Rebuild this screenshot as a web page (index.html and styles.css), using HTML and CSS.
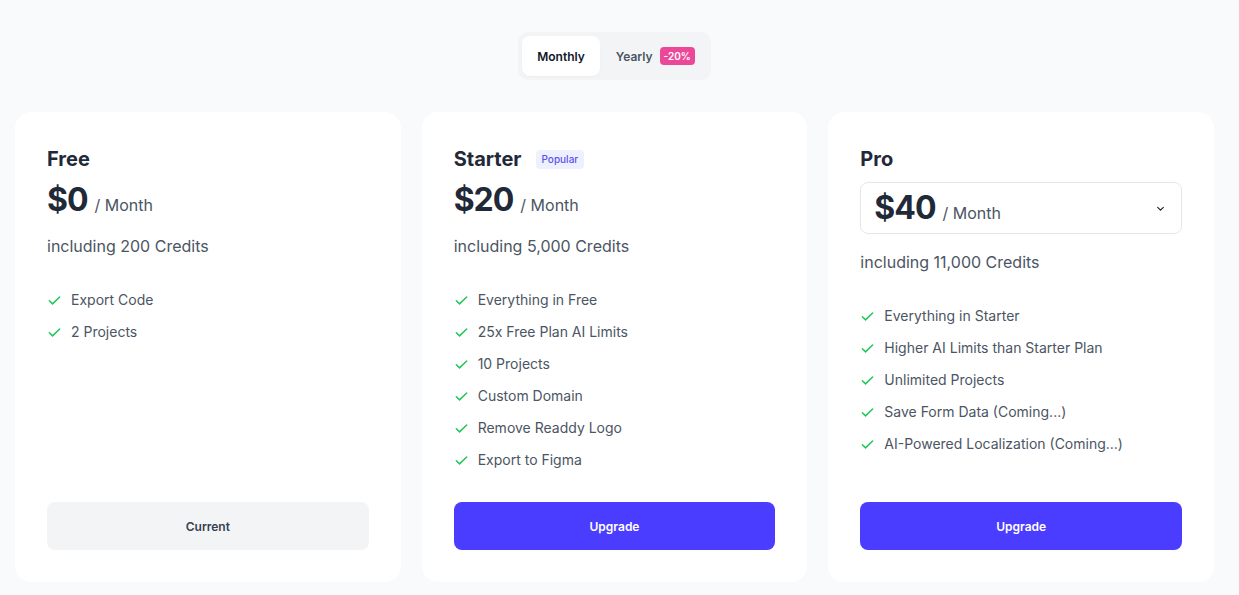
FILE: index.html
```html
<!DOCTYPE html>
<html>
<head>
<meta charset="utf-8">
<link rel="stylesheet" href="styles.css">
</head>
<body>
<div class="page">
  <div class="toggle-wrap">
    <div class="toggle">
      <button class="tab active">Monthly</button>
      <button class="tab">Yearly <span class="discount">-20%</span></button>
    </div>
  </div>
  <div class="cards">
    <div class="card">
      <div class="title-row"><h2 class="title">Free</h2></div>
      <div class="price"><span class="amount">$0</span><span class="per">/ Month</span></div>
      <p class="credits">including 200 Credits</p>
      <ul class="features">
        <li><svg class="check" viewBox="0 0 16 16"><path d="M2.5 8.3l3.4 3.3 7.6-7.4"/></svg>Export Code</li>
        <li><svg class="check" viewBox="0 0 16 16"><path d="M2.5 8.3l3.4 3.3 7.6-7.4"/></svg>2 Projects</li>
      </ul>
      <button class="btn btn-current">Current</button>
    </div>
    <div class="card">
      <div class="title-row"><h2 class="title">Starter</h2><span class="badge">Popular</span></div>
      <div class="price"><span class="amount">$20</span><span class="per">/ Month</span></div>
      <p class="credits">including 5,000 Credits</p>
      <ul class="features">
        <li><svg class="check" viewBox="0 0 16 16"><path d="M2.5 8.3l3.4 3.3 7.6-7.4"/></svg>Everything in Free</li>
        <li><svg class="check" viewBox="0 0 16 16"><path d="M2.5 8.3l3.4 3.3 7.6-7.4"/></svg>25x Free Plan AI Limits</li>
        <li><svg class="check" viewBox="0 0 16 16"><path d="M2.5 8.3l3.4 3.3 7.6-7.4"/></svg>10 Projects</li>
        <li><svg class="check" viewBox="0 0 16 16"><path d="M2.5 8.3l3.4 3.3 7.6-7.4"/></svg>Custom Domain</li>
        <li><svg class="check" viewBox="0 0 16 16"><path d="M2.5 8.3l3.4 3.3 7.6-7.4"/></svg>Remove Readdy Logo</li>
        <li><svg class="check" viewBox="0 0 16 16"><path d="M2.5 8.3l3.4 3.3 7.6-7.4"/></svg>Export to Figma</li>
      </ul>
      <button class="btn btn-primary">Upgrade</button>
    </div>
    <div class="card">
      <div class="title-row"><h2 class="title">Pro</h2></div>
      <div class="select">
        <div class="price"><span class="amount">$40</span><span class="per">/ Month</span></div>
        <svg class="chev" viewBox="0 0 16 16"><path d="M4.5 6.5L8 10l3.5-3.5"/></svg>
      </div>
      <p class="credits credits-pro">including 11,000 Credits</p>
      <ul class="features">
        <li><svg class="check" viewBox="0 0 16 16"><path d="M2.5 8.3l3.4 3.3 7.6-7.4"/></svg>Everything in Starter</li>
        <li><svg class="check" viewBox="0 0 16 16"><path d="M2.5 8.3l3.4 3.3 7.6-7.4"/></svg>Higher AI Limits than Starter Plan</li>
        <li><svg class="check" viewBox="0 0 16 16"><path d="M2.5 8.3l3.4 3.3 7.6-7.4"/></svg>Unlimited Projects</li>
        <li><svg class="check" viewBox="0 0 16 16"><path d="M2.5 8.3l3.4 3.3 7.6-7.4"/></svg>Save Form Data (Coming...)</li>
        <li><svg class="check" viewBox="0 0 16 16"><path d="M2.5 8.3l3.4 3.3 7.6-7.4"/></svg>AI-Powered Localization (Coming...)</li>
      </ul>
      <button class="btn btn-primary">Upgrade</button>
    </div>
  </div>
</div>
</body>
</html>
```
FILE: styles.css
```css
* { box-sizing: border-box; }
html, body { margin: 0; padding: 0; }
body {
  background: #f9fafb;
  font-family: Inter, "Noto Sans", sans-serif;
  color: #1f2937;
}
.page {
  width: 1239px;
  padding: 32px 25px 0 15px;
}
.toggle-wrap {
  display: flex;
  justify-content: center;
}
.toggle {
  display: flex;
  background: #f3f4f6;
  border-radius: 10px;
  padding: 4px;
  gap: 3px;
}
.tab {
  border: none;
  background: transparent;
  font-family: inherit;
  font-size: 12px;
  font-weight: 600;
  color: #4b5563;
  height: 40px;
  padding: 0 12px 0 13px;
  border-radius: 8px;
  display: flex;
  align-items: center;
  gap: 7px;
  cursor: pointer;
}
.tab.active {
  background: #ffffff;
  color: #111827;
  padding: 0 15px;
  box-shadow: 0 1px 2px rgba(0,0,0,0.03);
}
.discount {
  background: #ec4899;
  color: #fff;
  font-size: 10px;
  font-weight: 600;
  padding: 3px 4px;
  border-radius: 4px;
  line-height: 12px;
}
.cards {
  margin-top: 32px;
  display: grid;
  grid-template-columns: repeat(3, 1fr);
  gap: 21px;
}
.card {
  background: #ffffff;
  border-radius: 16px;
  padding: 34px 32px 32px 32px;
  display: flex;
  flex-direction: column;
  height: 470px;
}
.title-row {
  display: flex;
  align-items: center;
  gap: 14px;
  height: 26px;
}
.title {
  margin: 0;
  font-size: 20px;
  font-weight: 700;
  color: #1f2937;
  line-height: 26px;
}
.badge {
  background: #eef0ff;
  color: #5b50f0;
  font-size: 10px;
  font-weight: 500;
  padding: 3px 6px;
  border-radius: 4px;
  line-height: 13px;
}
.price {
  display: flex;
  align-items: baseline;
  margin-top: 8px;
  height: 40px;
}
.amount {
  font-size: 32px;
  font-weight: 700;
  color: #1f2937;
  line-height: 40px;
  letter-spacing: -1px;
}
.per {
  font-size: 16px;
  color: #4b5563;
  margin-left: 7px;
}
.select {
  margin-top: 10px;
  border: 1px solid #e5e7eb;
  border-radius: 8px;
  height: 52px;
  padding: 0 14px 0 13px;
  display: flex;
  align-items: center;
  justify-content: space-between;
}
.select .price { margin-top: 0; }
.chev {
  width: 13px;
  height: 13px;
  fill: none;
  stroke: #111827;
  stroke-width: 1.3;
  stroke-linecap: round;
  stroke-linejoin: round;
}
.credits {
  margin: 14px 0 0 0;
  font-size: 16px;
  line-height: 24px;
  color: #4b5563;
}
.credits-pro { margin-top: 16px; }
.features {
  list-style: none;
  margin: 32px 0 0 0;
  padding: 0;
  display: flex;
  flex-direction: column;
  gap: 12px;
}
.features li {
  display: flex;
  align-items: center;
  font-size: 14px;
  line-height: 20px;
  color: #4b5563;
}
.check {
  width: 15px;
  height: 15px;
  margin-right: 9px;
  fill: none;
  stroke: #22c55e;
  stroke-width: 1.6;
  stroke-linecap: round;
  stroke-linejoin: round;
}
.btn {
  margin-top: auto;
  height: 48px;
  width: 100%;
  border: none;
  border-radius: 8px;
  font-family: inherit;
  font-size: 12px;
  font-weight: 600;
  cursor: pointer;
}
.btn-current {
  background: #f3f4f6;
  color: #374151;
}
.btn-primary {
  background: #4a3dff;
  color: #ffffff;
}
```
